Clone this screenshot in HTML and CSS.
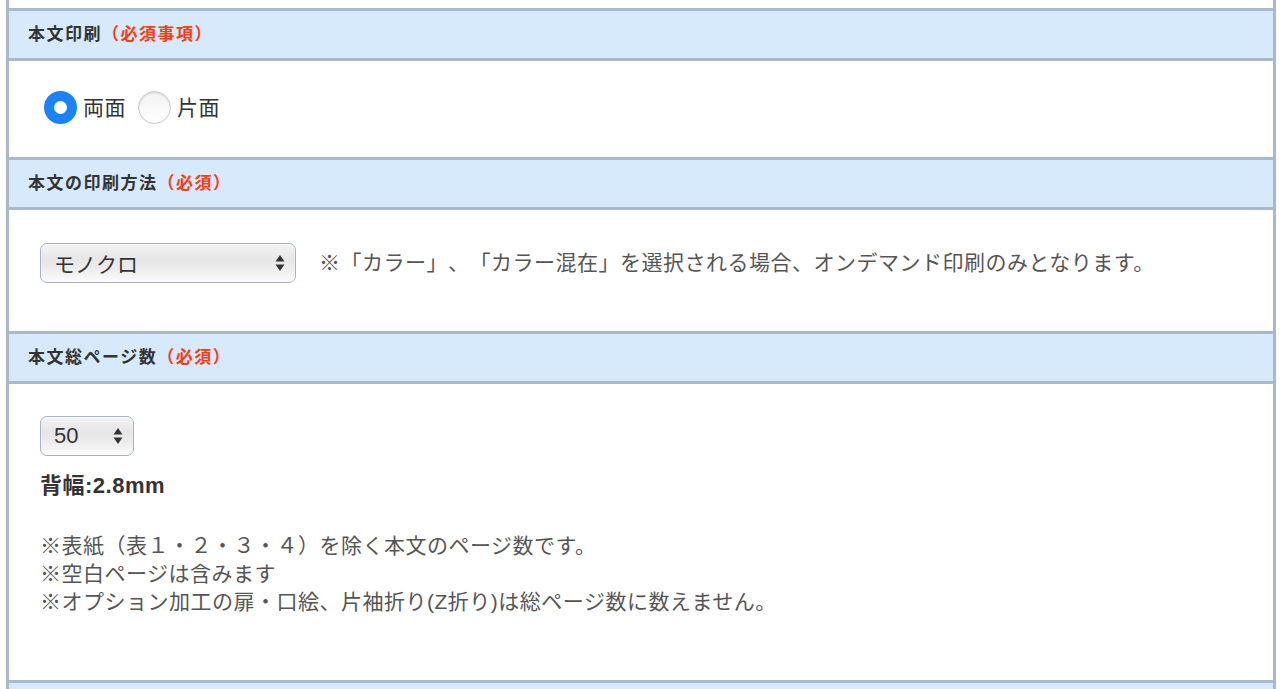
FILE: index.html
```
<html>

<head>
	<link rel="stylesheet" href="styles.css">
</head>

<body>
	<div class="form">
		<div class="tail"></div>

		<div class="item">
			<h3 class="itemHead">本文印刷<span class="req">（必須事項）</span></h3>
			<div class="itemBody bodyPrint">
				<div class="flex center">
					<label class="radio"><span class="radioMark checked"></span>両面</label>
					<label class="radio"><span class="radioMark"></span>片面</label>
				</div>
			</div>
		</div>

		<div class="item">
			<h3 class="itemHead">本文の印刷方法<span class="req">（必須）</span></h3>
			<div class="itemBody bodyMethod">
				<div class="flex center">
					<div class="select wide">
						<span>モノクロ</span>
						<svg class="arrows" width="10" height="18" viewBox="0 0 10 18">
							<path d="M5 1 L9.5 7.5 L0.5 7.5 Z" fill="#333" />
							<path d="M5 17 L9.5 10.5 L0.5 10.5 Z" fill="#333" />
						</svg>
					</div>
					<p class="note inline">※「カラー」、「カラー混在」を選択される場合、オンデマンド印刷のみとなります。</p>
				</div>
			</div>
		</div>

		<div class="item">
			<h3 class="itemHead">本文総ページ数<span class="req">（必須）</span></h3>
			<div class="itemBody bodyPages">
				<div class="select small">
					<span>50</span>
					<svg class="arrows" width="10" height="18" viewBox="0 0 10 18">
						<path d="M5 1 L9.5 7.5 L0.5 7.5 Z" fill="#333" />
						<path d="M5 17 L9.5 10.5 L0.5 10.5 Z" fill="#333" />
					</svg>
				</div>
				<p class="spine">背幅:2.8mm</p>
				<p class="note">※表紙（表１・２・３・４）を除く本文のページ数です。<br>※空白ページは含みます<br>※オプション加工の扉・口絵、片袖折り(Z折り)は総ページ数に数えません。</p>
			</div>
		</div>

		<div class="item">
			<h3 class="itemHead"></h3>
		</div>
	</div>
</body>

</html>
```

FILE: styles.css
```
body {
	margin: 0;
	background-color: white;
	font-family: "Liberation Sans", "Noto Sans CJK JP", sans-serif;
	color: #333;
	text-spacing-trim: space-all;
	overflow: hidden;
}

.form {
	width: 1264px;
	margin: 0 4px 0 6px;

	border-left: solid 3px #a9b9ca;
	border-right: solid 3px #a9b9ca;
}

.tail {
	height: 8px;
}

.itemHead {
	height: 47px;
	margin: 0;
	padding-left: 19px;

	border-top: solid 3px #a9b9ca;
	border-bottom: solid 3px #a9b9ca;
	background-color: #d6eafc;

	font-size: 17px;
	letter-spacing: 1.5px;
	line-height: 47px;
	font-weight: bold;
	color: #333;
}

.req {
	color: #fa3c12;
}

.itemBody {
	box-sizing: border-box;
	padding-left: 31px;
}

.bodyPrint {
	height: 96px;
	padding-top: 30px;
}

.bodyMethod {
	height: 121px;
	padding-top: 33px;
}

.bodyPages {
	height: 296px;
	padding-top: 32px;
}

.flex {
	display: flex;
}

.center {
	align-items: center;
}

.radio {
	display: flex;
	align-items: center;
	margin-right: 12px;

	font-size: 21px;
	letter-spacing: 0.5px;
	line-height: 33px;
}

.radioMark {
	box-sizing: border-box;
	width: 33px;
	height: 33px;
	margin: 0 6px 0 4px;

	border: solid 1px #c9c9c9;
	border-radius: 50%;
	background: linear-gradient(#f2f2f2, #ffffff);
	box-shadow: inset 0 1px 2px rgba(0, 0, 0, 0.12);
}

.radioMark.checked {
	border: solid 10px #1a82fb;
	background: white;
	box-shadow: none;
}

.radio:last-child .radioMark {
	margin-left: 0;
}

.select {
	box-sizing: border-box;
	height: 40px;
	padding: 0 10px 0 13px;
	display: flex;
	align-items: center;
	justify-content: space-between;

	border: solid 1px #a3b4c6;
	border-radius: 7px;
	background: linear-gradient(#f3f3f3 0%, #e6e6e6 40%, #ececec 65%, #fbfbfb 100%);
	box-shadow: inset 0 1px 1px rgba(255, 255, 255, 0.8);

	font-size: 21px;
	color: #333;
}

.select.wide {
	width: 256px;
}

.select.small {
	width: 94px;
	font-size: 22px;
}

.arrows {
	flex-shrink: 0;
}

.note {
	margin: 0;

	font-size: 21px;
	letter-spacing: 0.5px;
	line-height: 28px;
	color: #555;
}

.note.inline {
	margin-left: 23px;
}

.spine {
	margin: 16px 0 32px;

	font-size: 22px;
	letter-spacing: 0.5px;
	line-height: 28px;
	font-weight: bold;
	color: #333;
}
```
